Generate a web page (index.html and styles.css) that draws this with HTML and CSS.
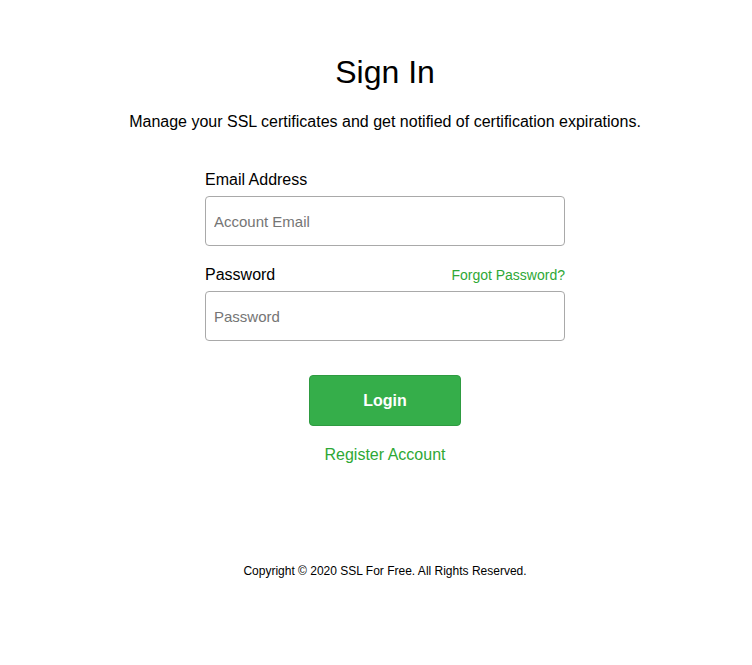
FILE: index.html
```html
<!DOCTYPE html>
<html lang="en">
<head>
    <meta charset="UTF-8">
    <meta name="viewport" content="width=device-width, initial-scale=1.0">
    <title>Sign In - SSL For Free</title>
    <link rel="stylesheet" href="styles.css">
</head>
<body>
    <div class="page">
        <h1>Sign In</h1>
        <p class="lead">Manage your SSL certificates and get notified of certification expirations.</p>

        <!-- Login form -->
        <form class="login-form">
            <label class="field-label" for="email">Email Address</label>
            <input type="text" id="email" placeholder="Account Email">

            <div class="label-row">
                <label class="field-label" for="password">Password</label>
                <a href="#" class="forgot">Forgot Password?</a>
            </div>
            <input type="password" id="password" placeholder="Password">

            <div class="actions">
                <button type="submit">Login</button>
                <a href="#" class="register">Register Account</a>
            </div>
        </form>

        <div class="footer">Copyright &copy; 2020 SSL For Free. All Rights Reserved.</div>
    </div>
</body>
</html>
```

FILE: styles.css
```css
body {
    margin: 0;
    font-family: "Liberation Sans", Arial, sans-serif;
    color: #000;
    background: #fff;
}
.page {
    padding: 54px 0 0 18px;
    text-align: center;
}
h1 {
    font-size: 32px;
    font-weight: normal;
    margin: 0;
    line-height: 37px;
}
.lead {
    font-size: 16px;
    margin: 22px 0 0;
    line-height: 18px;
}
.login-form {
    width: 360px;
    margin: 40px auto 0;
    text-align: left;
}
.field-label {
    display: block;
    font-size: 16px;
    line-height: 18px;
    margin-bottom: 7px;
}
.label-row {
    display: flex;
    justify-content: space-between;
    align-items: baseline;
    margin-top: 20px;
}
.forgot {
    font-size: 14px;
    color: #2ea836;
    text-decoration: none;
}
input[type="text"], input[type="password"] {
    display: block;
    width: 100%;
    height: 50px;
    padding: 0 8px;
    font-family: inherit;
    font-size: 15px;
    border: 1px solid #a9a9a9;
    border-radius: 4px;
    box-sizing: border-box;
    outline: none;
}
input::placeholder {
    color: #757575;
}
.actions {
    text-align: center;
    margin-top: 34px;
}
button {
    width: 152px;
    height: 51px;
    background-color: #35ae4a;
    color: #fff;
    font-family: inherit;
    font-size: 16px;
    font-weight: bold;
    border: 1px solid #2e9b41;
    border-radius: 4px;
    cursor: pointer;
}
.register {
    display: block;
    margin-top: 20px;
    font-size: 16px;
    color: #2ea836;
    text-decoration: none;
}
.footer {
    margin-top: 100px;
    font-size: 12px;
}
```
